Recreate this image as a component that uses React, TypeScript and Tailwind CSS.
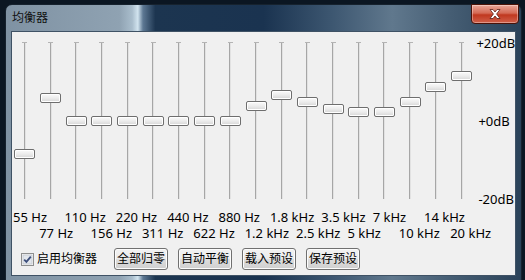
import React from "react";

type Band = { label: string; db: number };

const bands: Band[] = [
  { label: "55 Hz", db: -8.6 },
  { label: "77 Hz", db: 5.8 },
  { label: "110 Hz", db: 0 },
  { label: "156 Hz", db: 0 },
  { label: "220 Hz", db: 0 },
  { label: "311 Hz", db: 0 },
  { label: "440 Hz", db: 0 },
  { label: "622 Hz", db: 0 },
  { label: "880 Hz", db: 0 },
  { label: "1.2 kHz", db: 3.7 },
  { label: "1.8 kHz", db: 6.5 },
  { label: "2.5 kHz", db: 4.7 },
  { label: "3.5 kHz", db: 2.9 },
  { label: "5 kHz", db: 2.2 },
  { label: "7 kHz", db: 2.2 },
  { label: "10 kHz", db: 4.7 },
  { label: "14 kHz", db: 8.6 },
  { label: "20 kHz", db: 11.4 },
];

// 78px of travel for 20dB, track is 157px tall, thumb 10px
const thumbTop = (db: number) => 73.5 - db * 3.9;

const Slider: React.FC<{ db: number }> = ({ db }) => (
  <div className="relative h-[157px] flex justify-center">
    <div className="absolute top-0 w-[5px] h-px bg-[#b4b4b4]" />
    <div className="w-[2px] h-full border-l border-l-[#a6a6a6] border-r border-r-[#e2e2e2]" />
    <div
      className="absolute w-[21px] h-[10px] rounded-[2px] border border-[#6e6e6e] bg-[linear-gradient(#fbfbfb,#ececec_50%,#d6d6d6)] shadow-[inset_0_0_0_1px_#ffffff]"
      style={{ top: thumbTop(db) }}
    />
  </div>
);

const WinButton: React.FC<{ children: React.ReactNode }> = ({ children }) => (
  <button className="w-[54px] h-[22px] rounded-[3px] border border-[#707070] bg-[linear-gradient(#f2f2f2,#ebebeb_48%,#dddddd_52%,#cfcfcf)] shadow-[inset_0_0_0_1px_#fcfcfc] text-[12px] leading-none text-black">
    {children}
  </button>
);

const App: React.FC = () => {
  return (
    <div className="w-[525px] h-[280px] overflow-hidden bg-[#0b1622] pt-[4px] pl-[5px] font-['Noto_Sans','Noto_Sans_CJK_SC',sans-serif]">
      <div className="w-[517px] h-[290px] rounded-t-[7px] border border-[#16222e] px-[5px] bg-[linear-gradient(90deg,#7f92a3_0%,#8fa2b2_22%,#a9bdcc_24.5%,#d2e4ef_25.6%,#5d7893_26.6%,#1c3550_29%,#1a3350_50%,#3c5670_63%,#60788d_75%,#465e74_86%,#2a4259_100%)]">
        <div className="h-[26px] flex items-start justify-between">
          <span className="mt-[6px] pl-[1px] text-[12px] leading-[14px] text-[#111]">均衡器</span>
          <button className="w-[48px] h-[20px] -mt-px -mr-[3px] rounded-b-[4px] border border-[#4a1208] bg-[linear-gradient(#e8a598,#d46a55_45%,#c0381f_55%,#d0604a)] shadow-[inset_0_0_0_1px_rgba(255,255,255,0.35)] flex items-center justify-center">
            <svg width="14" height="12" viewBox="0 0 14 12">
              <path
                d="M2 1.5 L5 1.5 L7 4 L9 1.5 L12 1.5 L8.6 6 L12 10.5 L9 10.5 L7 8 L5 10.5 L2 10.5 L5.4 6 Z"
                fill="#ffffff"
                stroke="#5a2018"
                strokeWidth="0.8"
              />
            </svg>
          </button>
        </div>
        <div className="h-[245px] bg-[#f0f0f0] border border-[#3f5265]">
          <div className="mt-[10px] h-[157px] flex items-start">
            <div className="grid grid-cols-[repeat(18,25.7px)]">
              {bands.map((b) => (
                <Slider key={b.label} db={b.db} />
              ))}
            </div>
            <div className="-mt-[6px] h-[170px] shrink-0 pl-[2px] flex flex-col justify-between text-[13px] leading-[14px] text-black">
              <span>+20dB</span>
              <span className="pl-[2px]">+0dB</span>
              <span className="pl-[2px]">-20dB</span>
            </div>
          </div>

          <div className="mt-[10px] grid grid-cols-[repeat(18,25.7px)] text-[13px] leading-[16px] text-black whitespace-nowrap">
            {bands.map((b, i) =>
              i % 2 === 0 ? (
                <span key={b.label} className="row-start-1 col-span-2 pl-px" style={{ gridColumnStart: i + 1 }}>
                  {b.label}
                </span>
              ) : (
                <span key={b.label} className="row-start-2 col-span-2 pl-[1.5px]" style={{ gridColumnStart: i + 1 }}>
                  {b.label}
                </span>
              )
            )}
          </div>

          <div className="mt-[7px] h-[22px] flex items-center pl-[9px]">
            <label className="flex items-center gap-[3px] text-[12px] text-black">
              <svg width="13" height="13" viewBox="0 0 13 13">
                <rect x="0.5" y="0.5" width="12" height="12" fill="#f4f4f4" stroke="#8e8f8f" />
                <rect x="2" y="2" width="9" height="9" fill="#e2e6ec" stroke="#b9bec6" strokeWidth="0.6" />
                <path d="M3.2 6.6 L5.4 8.9 L9.8 3.6" fill="none" stroke="#3d4f7c" strokeWidth="1.8" />
              </svg>
              <span className="leading-none">启用均衡器</span>
            </label>
            <div className="ml-[17px] flex gap-[10px]">
              <WinButton>全部归零</WinButton>
              <WinButton>自动平衡</WinButton>
              <WinButton>载入预设</WinButton>
              <WinButton>保存预设</WinButton>
            </div>
          </div>
        </div>
      </div>
    </div>
  );
};

export default App;
